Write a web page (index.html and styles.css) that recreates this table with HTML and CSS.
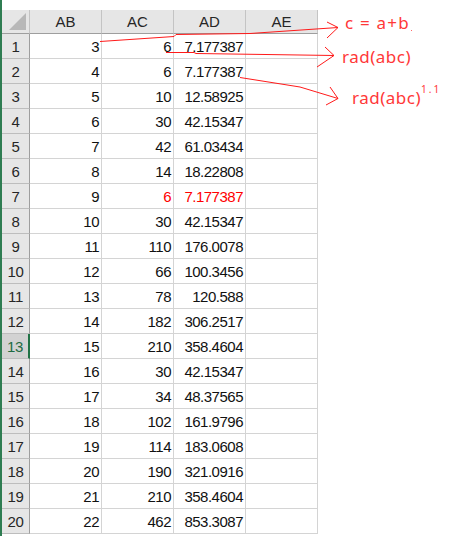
FILE: index.html
```html
<!DOCTYPE html>
<html>
<head>
<meta charset="utf-8">
<link rel="stylesheet" href="styles.css">
</head>
<body>
<div class="page">
  <div class="sheet">
    <div class="corner"><svg class="tri" width="17" height="17" viewBox="0 0 17 17"><polygon points="17,0 17,17 0,17" fill="#b8b8b8"/></svg></div>
    <div class="colhead">AB</div>
    <div class="colhead">AC</div>
    <div class="colhead">AD</div>
    <div class="colhead">AE</div>

    <div class="rowhead">1</div><div class="cell">3</div><div class="cell">6</div><div class="cell">7.177387</div><div class="cell"></div>
    <div class="rowhead">2</div><div class="cell">4</div><div class="cell">6</div><div class="cell">7.177387</div><div class="cell"></div>
    <div class="rowhead">3</div><div class="cell">5</div><div class="cell">10</div><div class="cell">12.58925</div><div class="cell"></div>
    <div class="rowhead">4</div><div class="cell">6</div><div class="cell">30</div><div class="cell">42.15347</div><div class="cell"></div>
    <div class="rowhead">5</div><div class="cell">7</div><div class="cell">42</div><div class="cell">61.03434</div><div class="cell"></div>
    <div class="rowhead">6</div><div class="cell">8</div><div class="cell">14</div><div class="cell">18.22808</div><div class="cell"></div>
    <div class="rowhead">7</div><div class="cell">9</div><div class="cell red">6</div><div class="cell red">7.177387</div><div class="cell"></div>
    <div class="rowhead">8</div><div class="cell">10</div><div class="cell">30</div><div class="cell">42.15347</div><div class="cell"></div>
    <div class="rowhead">9</div><div class="cell">11</div><div class="cell">110</div><div class="cell">176.0078</div><div class="cell"></div>
    <div class="rowhead">10</div><div class="cell">12</div><div class="cell">66</div><div class="cell">100.3456</div><div class="cell"></div>
    <div class="rowhead">11</div><div class="cell">13</div><div class="cell">78</div><div class="cell">120.588</div><div class="cell"></div>
    <div class="rowhead">12</div><div class="cell">14</div><div class="cell">182</div><div class="cell">306.2517</div><div class="cell"></div>
    <div class="rowhead sel">13</div><div class="cell">15</div><div class="cell">210</div><div class="cell">358.4604</div><div class="cell"></div>
    <div class="rowhead">14</div><div class="cell">16</div><div class="cell">30</div><div class="cell">42.15347</div><div class="cell"></div>
    <div class="rowhead">15</div><div class="cell">17</div><div class="cell">34</div><div class="cell">48.37565</div><div class="cell"></div>
    <div class="rowhead">16</div><div class="cell">18</div><div class="cell">102</div><div class="cell">161.9796</div><div class="cell"></div>
    <div class="rowhead">17</div><div class="cell">19</div><div class="cell">114</div><div class="cell">183.0608</div><div class="cell"></div>
    <div class="rowhead">18</div><div class="cell">20</div><div class="cell">190</div><div class="cell">321.0916</div><div class="cell"></div>
    <div class="rowhead">19</div><div class="cell">21</div><div class="cell">210</div><div class="cell">358.4604</div><div class="cell"></div>
    <div class="rowhead">20</div><div class="cell">22</div><div class="cell">462</div><div class="cell">853.3087</div><div class="cell"></div>
  </div>

  <svg class="notes" width="466" height="536" viewBox="0 0 466 536">
    <g fill="none" stroke="#ff1a1a" stroke-width="1">
      <polyline points="100,41.5 174,36.5 176,34.5 250,33.5 338,27.5"/>
      <polyline points="327,22 338,27.5 327,38"/>
      <polyline points="166,52.5 194,52.5 196,53.5 334,55.5"/>
      <polyline points="325,47 334,55.5 317,67"/>
      <polyline points="240,77.5 300,87 338,98.5"/>
      <polyline points="330,87 338,98.5 326,105"/>
    </g>
    <g class="ntext">
      <text x="345" y="29" class="big" letter-spacing="1.2">c = a+b</text>
      <rect x="411" y="30" width="1" height="1" fill="#ff6a6a"/>
      <text x="342" y="63" class="big" letter-spacing="0.5">rad(abc)</text>
      <text x="352" y="104" class="big" letter-spacing="0.5">rad(abc)</text>
      <text x="421" y="93" class="sup" letter-spacing="2">1.1</text>
    </g>
  </svg>
</div>
</body>
</html>
```

FILE: styles.css
```css
html, body {
  margin: 0;
  padding: 0;
  background: #ffffff;
}

.page {
  position: relative;
  width: 466px;
  height: 536px;
  overflow: hidden;
}

.sheet {
  display: grid;
  grid-template-columns: 28px repeat(4, 72px);
  grid-auto-rows: 25px;
  grid-template-rows: 24px;
  border-left: 2px solid #2f7d52;
  padding-top: 10px;
  width: 316px;
  font-family: "Liberation Sans", Arial, sans-serif;
  font-size: 15px;
  color: #111;
  height: 526px;
}

.corner {
  position: relative;
  background: #e6e6e6;
  border-right: 1px solid #c4c4c4;
  border-bottom: 1px solid #9e9e9e;
  box-sizing: border-box;
}

.tri {
  position: absolute;
  left: 7px;
  top: 3px;
}

.colhead {
  background: #e6e6e6;
  border-right: 1px solid #c4c4c4;
  border-bottom: 1px solid #9e9e9e;
  box-sizing: border-box;
  text-align: center;
  line-height: 24px;
  color: #262626;
}

.rowhead {
  background: #e6e6e6;
  border-right: 1px solid #9e9e9e;
  border-bottom: 1px solid #bdbdbd;
  box-sizing: border-box;
  text-align: center;
  line-height: 25px;
  color: #262626;
  letter-spacing: -0.3px;
}

.rowhead.sel {
  background: #d2d2d2;
  color: #1f6b43;
  border-right: 2px solid #217346;
}

.cell {
  border-right: 1px solid #d4d4d4;
  border-bottom: 1px solid #d4d4d4;
  box-sizing: border-box;
  text-align: right;
  padding-right: 2px;
  line-height: 25px;
  letter-spacing: -0.5px;
  color: #111;
}

.cell.red {
  color: #ff0000;
}

.notes {
  position: absolute;
  left: 0;
  top: 0;
  pointer-events: none;
}

.ntext text {
  fill: #ff3838;
  font-family: "Noto Sans", "DejaVu Sans", sans-serif;
}

.big {
  font-size: 17px;
}

.sup {
  font-size: 10px;
}
```
